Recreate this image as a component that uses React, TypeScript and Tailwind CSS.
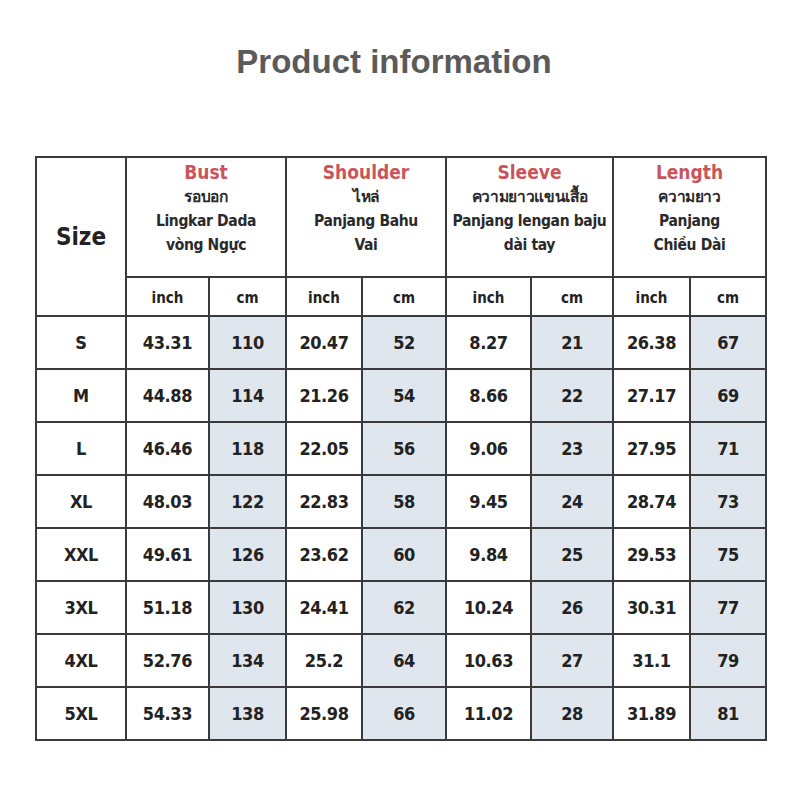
import React from "react";

const rows: [string, string, string, string, string, string, string, string, string][] = [
  ["S", "43.31", "110", "20.47", "52", "8.27", "21", "26.38", "67"],
  ["M", "44.88", "114", "21.26", "54", "8.66", "22", "27.17", "69"],
  ["L", "46.46", "118", "22.05", "56", "9.06", "23", "27.95", "71"],
  ["XL", "48.03", "122", "22.83", "58", "9.45", "24", "28.74", "73"],
  ["XXL", "49.61", "126", "23.62", "60", "9.84", "25", "29.53", "75"],
  ["3XL", "51.18", "130", "24.41", "62", "10.24", "26", "30.31", "77"],
  ["4XL", "52.76", "134", "25.2", "64", "10.63", "27", "31.1", "79"],
  ["5XL", "54.33", "138", "25.98", "66", "11.02", "28", "31.89", "81"],
];

const heads: { en: string; lines: string[] }[] = [
  { en: "Bust", lines: ["รอบอก", "Lingkar Dada", "vòng Ngực"] },
  { en: "Shoulder", lines: ["ไหล่", "Panjang Bahu", "Vai"] },
  { en: "Sleeve", lines: ["ความยาวแขนเสื้อ", "Panjang lengan baju", "dài tay"] },
  { en: "Length", lines: ["ความยาว", "Panjang", "Chiều Dài"] },
];

const widths = [90, 83, 77, 76, 84, 85, 82, 77, 76];

export default function App() {
  return (
    <div className="w-[800px] h-[800px] bg-white flex flex-col items-center">
      <h1 className="mt-[42px] mr-[12px] text-[33px] leading-[40px] font-bold text-[#5a5a5a] font-['Liberation_Sans',Arial,sans-serif]">
        Product information
      </h1>
      <table
        className="mt-[74px] ml-[2px] table-fixed border-collapse border-[2px] border-[#3a3a3a] text-[#222] font-['DejaVu_Sans_Condensed','DejaVu_Sans',sans-serif]"
        style={{ width: 730 }}
      >
        <colgroup>
          {widths.map((w, i) => (
            <col key={i} style={{ width: w }} />
          ))}
        </colgroup>
        <thead>
          <tr className="h-[120px]">
            <th
              rowSpan={2}
              className="border-[2px] border-[#3a3a3a] text-[24px] font-bold align-middle"
            >
              Size
            </th>
            {heads.map((h) => (
              <th
                key={h.en}
                colSpan={2}
                className="border-[2px] border-[#3a3a3a] align-top pt-[2px]"
              >
                <div className="text-[19px] leading-[25px] font-bold text-[#c9555c]">{h.en}</div>
                {h.lines.map((l) => (
                  <div key={l} className="text-[15.5px] leading-[24px] font-bold text-[#2a2a2a] whitespace-nowrap tracking-[-0.35px]">
                    {l}
                  </div>
                ))}
              </th>
            ))}
          </tr>
          <tr className="h-[39px]">
            {heads.flatMap((h) => [
              <th key={h.en + "i"} className="border-[2px] border-[#3a3a3a] text-[15px] font-bold pt-[3px]">
                inch
              </th>,
              <th key={h.en + "c"} className="border-[2px] border-[#3a3a3a] text-[15px] font-bold pt-[3px]">
                cm
              </th>,
            ])}
          </tr>
        </thead>
        <tbody>
          {rows.map((r) => (
            <tr key={r[0]} className="h-[53px]">
              {r.map((v, i) => (
                <td
                  key={i}
                  className={
                    "border-[2px] border-[#3a3a3a] text-center text-[18px] font-bold tracking-[-0.4px] " +
                    (i > 0 && i % 2 === 0 ? "bg-[#dfe6ee]" : "bg-white")
                  }
                >
                  {v}
                </td>
              ))}
            </tr>
          ))}
        </tbody>
      </table>
    </div>
  );
}
